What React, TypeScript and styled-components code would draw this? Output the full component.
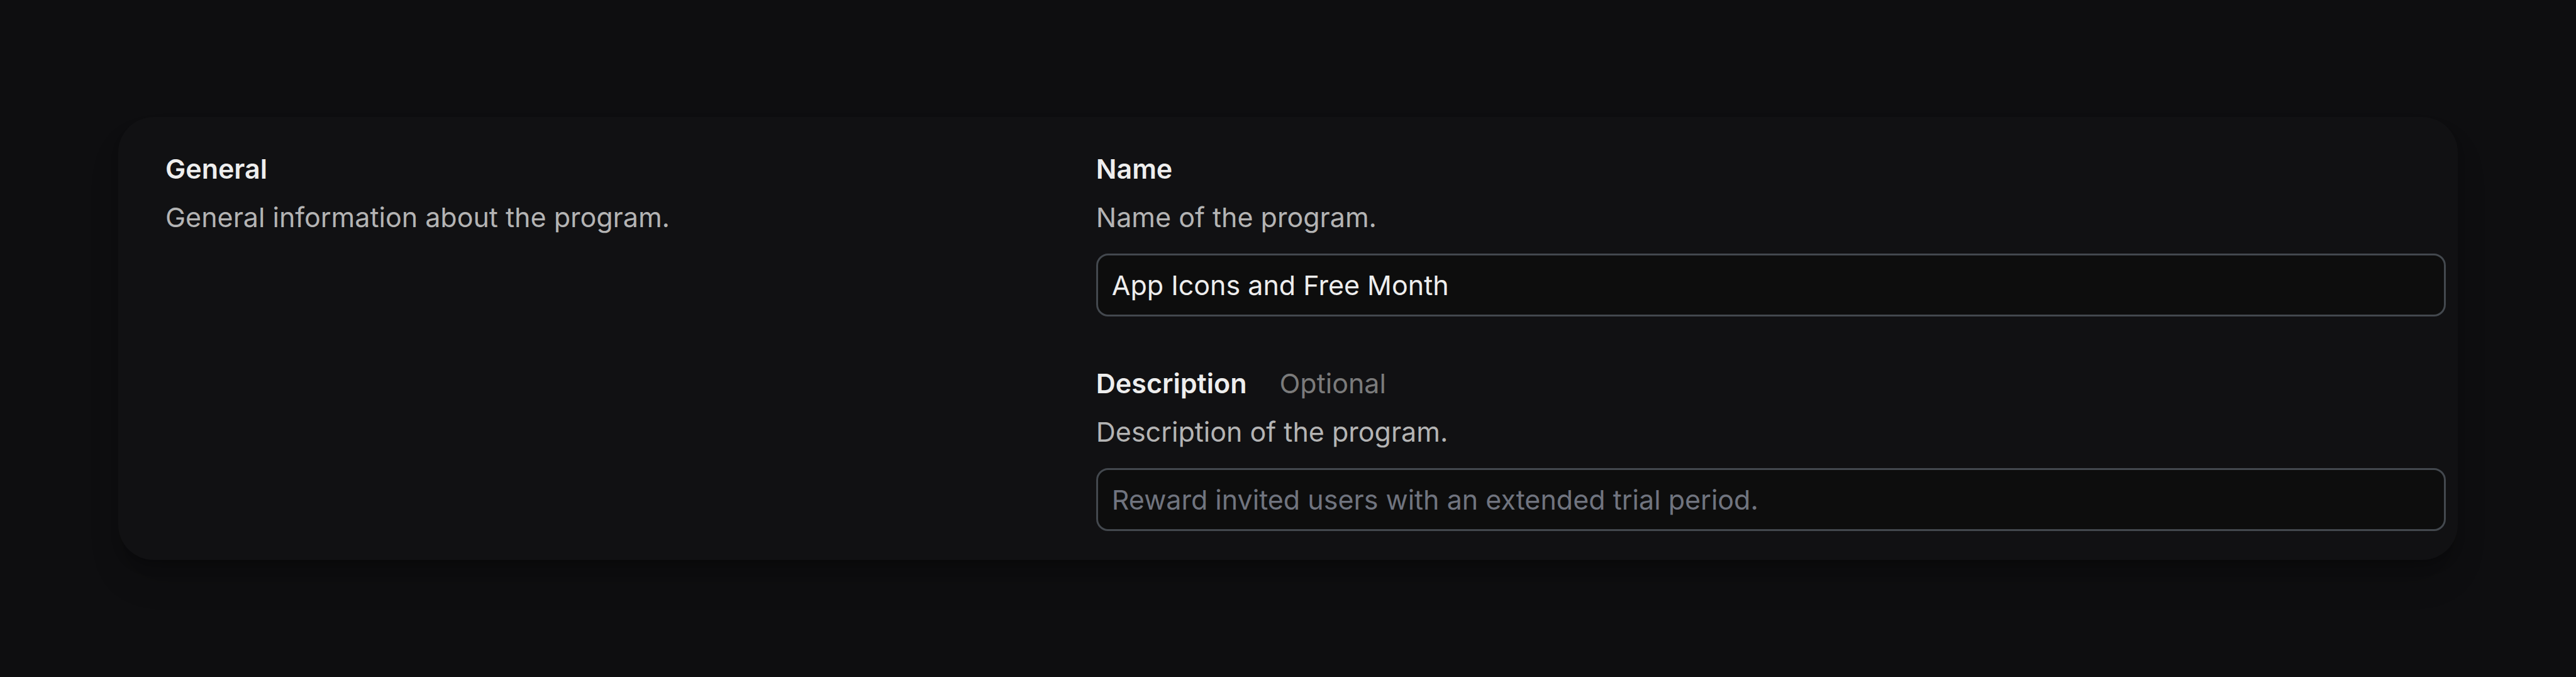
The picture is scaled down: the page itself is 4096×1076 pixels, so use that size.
import React, { useState } from "react";
import styled, { createGlobalStyle } from "styled-components";

const GlobalStyle = createGlobalStyle`
  *, *::before, *::after { box-sizing: border-box; }
  body {
    margin: 0;
    min-height: 100vh;
    background: #0e0e10;
    font-family: Inter, "Liberation Sans", sans-serif;
    font-size: 43px;
    line-height: 60px;
    color: #eeeeee;
  }
`;

const Page = styled.main`
  padding: 186px 188px;
`;

const Card = styled.section`
  display: grid;
  grid-template-columns: minmax(0, 2fr) minmax(0, 3fr);
  gap: 49px;
  padding: 52px 19px 46px 75px;
  border-radius: 56px;
  background: #111113;
  box-shadow:
    0 37px 56px -11px rgba(0, 0, 0, 0.2),
    0 15px 22px -11px rgba(0, 0, 0, 0.3);
`;

const Stack = styled.div<{ $gap: number }>`
  display: flex;
  flex-direction: column;
  gap: ${({ $gap }) => $gap}px;
`;

const Title = styled.h2`
  margin: 0;
  font-size: inherit;
  font-weight: 600;
`;

const Label = styled.label`
  font-weight: 600;
`;

const LabelRow = styled.div`
  display: flex;
  gap: 52px;
`;

const Optional = styled.span`
  color: #7b7b7b;
`;

const Hint = styled.p`
  margin: 0;
  color: #b4b4b4;
`;

const TextInput = styled.input`
  display: block;
  width: 100%;
  height: 100px;
  padding: 0 22px;
  border: 3px solid #43484e;
  border-radius: 19px;
  outline: none;
  background: #0d0d0d;
  color: #eeeeee;
  font: inherit;

  &::placeholder {
    color: #70747f;
    opacity: 1;
  }

  &:focus-visible {
    border-color: #7b8088;
  }
`;

type FieldProps = {
  id: string;
  label: string;
  hint: string;
  initialValue?: string;
  placeholder?: string;
  optional?: boolean;
};

function Field({ id, label, hint, initialValue = "", placeholder, optional }: FieldProps) {
  const [value, setValue] = useState(initialValue);
  return (
    <Stack $gap={28}>
      <Stack $gap={17}>
        <LabelRow>
          <Label htmlFor={id}>{label}</Label>
          {optional && <Optional>Optional</Optional>}
        </LabelRow>
        <Hint id={`${id}-hint`}>{hint}</Hint>
      </Stack>
      <TextInput
        id={id}
        type="text"
        value={value}
        placeholder={placeholder}
        aria-describedby={`${id}-hint`}
        onChange={(event) => setValue(event.target.value)}
      />
    </Stack>
  );
}

export default function App() {
  return (
    <>
      <GlobalStyle />
      <Page>
        <Card>
          <Stack $gap={17}>
            <Title>General</Title>
            <Hint>General information about the program.</Hint>
          </Stack>
          <Stack $gap={76}>
            <Field
              id="program-name"
              label="Name"
              hint="Name of the program."
              initialValue="App Icons and Free Month"
            />
            <Field
              id="program-description"
              label="Description"
              hint="Description of the program."
              placeholder="Reward invited users with an extended trial period."
              optional
            />
          </Stack>
        </Card>
      </Page>
    </>
  );
}
